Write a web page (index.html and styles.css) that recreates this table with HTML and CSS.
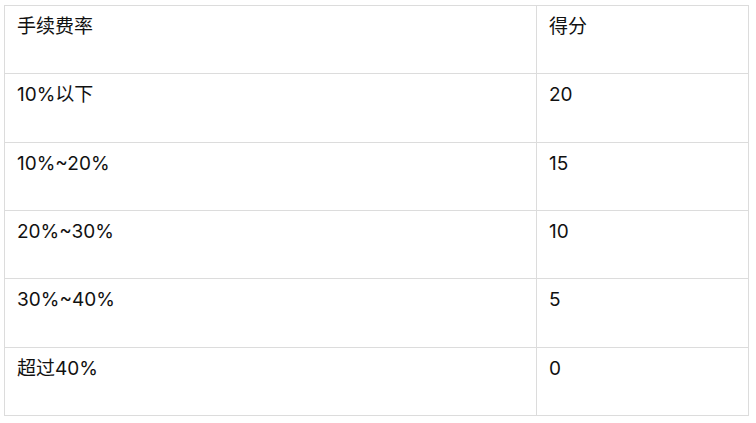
FILE: index.html
```html
<!DOCTYPE html>
<html lang="zh">
<head>
<meta charset="utf-8">
<link rel="stylesheet" href="styles.css">
</head>
<body>
<table class="fee-table">
  <colgroup><col class="c1"><col class="c2"></colgroup>
  <tr><td>手续费率</td><td>得分</td></tr>
  <tr><td>10%以下</td><td>20</td></tr>
  <tr><td>10%~20%</td><td>15</td></tr>
  <tr><td>20%~30%</td><td>10</td></tr>
  <tr><td>30%~40%</td><td>5</td></tr>
  <tr><td>超过40%</td><td>0</td></tr>
</table>
</body>
</html>
```
FILE: styles.css
```css
html, body {
  margin: 0;
  padding: 0;
  background: #fff;
}
body {
  padding: 5px 0 0 4px;
  font-family: Inter, "Noto Sans CJK SC", sans-serif;
  font-size: 19px;
  color: #111;
}
.fee-table {
  border-collapse: collapse;
  width: 745px;
  table-layout: fixed;
}
.c1 { width: 532px; }
.fee-table tr {
  height: 68.33px;
}
.fee-table td {
  border: 1px solid #dcdcdc;
  vertical-align: top;
  padding: 9px 12px 0 12px;
  line-height: 24px;
}
```
